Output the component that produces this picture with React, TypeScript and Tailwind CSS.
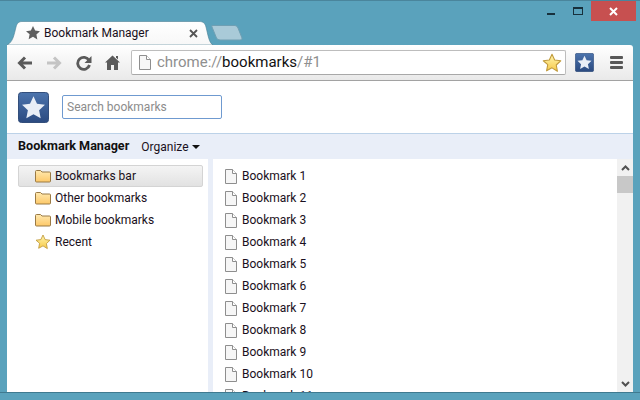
const STAR = "M12 1.5l3.2 6.9 7.3.9-5.4 5.1 1.4 7.5L12 17.8l-6.5 3.6 1.4-7.5L1.5 9.3l7.3-.9z";
const bookmarks = ["Bookmark 1", "Bookmark 2", "Bookmark 3", "Bookmark 4", "Bookmark 5", "Bookmark 6", "Bookmark 7", "Bookmark 8", "Bookmark 9", "Bookmark 10", "Bookmark 11"];

function GoldStar({ size }: { size: number }) {
  return (
    <svg width={size} height={size} viewBox="0 0 24 24" className="shrink-0">
      <defs>
        <linearGradient id="gold" x1="0" y1="0" x2="0" y2="1">
          <stop offset="0" stopColor="#fff6b0" />
          <stop offset="1" stopColor="#f7c948" />
        </linearGradient>
      </defs>
      <path d={STAR} fill="url(#gold)" stroke="#c09a3c" strokeWidth="1.3" strokeLinejoin="round" />
    </svg>
  );
}

function BlueStar({ size, rounded }: { size: number; rounded: number }) {
  return (
    <svg width={size} height={size} viewBox="0 0 32 32" className="shrink-0">
      <defs>
        <linearGradient id="blue" x1="0" y1="0" x2="0" y2="1">
          <stop offset="0" stopColor="#4c74ad" />
          <stop offset="1" stopColor="#2b4a80" />
        </linearGradient>
      </defs>
      <rect x="0.5" y="0.5" width="31" height="31" rx={rounded} fill="url(#blue)" stroke="#2e4a78" />
      <path d="M16 4.500l3.600 7.600 8.200 1-6 5.700 1.600 8.200L16 22.900l-7.400 4.100 1.600-8.200-6-5.700 8.200-1z" fill="#e9eef6" />
    </svg>
  );
}

function Folder() {
  return (
    <svg width="16" height="14" viewBox="0 0 16 14" className="shrink-0">
      <defs>
        <linearGradient id="folder" x1="0" y1="0" x2="0" y2="1">
          <stop offset="0" stopColor="#ffe9b0" />
          <stop offset="1" stopColor="#fdc868" />
        </linearGradient>
      </defs>
      <path d="M.5 12V2.500q0-1 1-1h4L7 3h7.500q1 0 1 1V12q0 1-1 1h-13q-1 0-1-1z" fill="url(#folder)" stroke="#9a7a45" />
    </svg>
  );
}

function PageIcon({ className }: { className: string }) {
  return (
    <svg width="12" height="15" viewBox="0 0 12 15" className={className}>
      <path d="M.5.5h7l4 4v10H.5z" fill="#f6f6f6" stroke="#8e8e8e" />
      <path d="M7.500.5v4h4" fill="#fff" stroke="#8e8e8e" />
    </svg>
  );
}

function TreeRow({ label, selected, star }: { label: string; selected?: boolean; star?: boolean }) {
  return (
    <div className={`h-[22px] flex items-center gap-[4px] rounded-[2px] ${selected ? "bg-gradient-to-b from-[#f4f4f4] to-[#e2e2e2] border border-[#d4d4d4] pl-[16px]" : "pl-[17px]"}`}>
      {star ? <GoldStar size={16} /> : <Folder />}
      <span>{label}</span>
    </div>
  );
}

export default function App() {
  return (
    <div className="w-[640px] h-[400px] overflow-hidden bg-[#5aa2bc] border-t border-[#4a859c] flex flex-col text-[12px] text-[#1a1020] [font-family:Roboto,sans-serif]">
      {/* window buttons */}
      <div className="h-[20px] shrink-0 flex justify-end items-start pr-[4px]">
        <div className="w-[8px] h-[2px] bg-[#17303c] mt-[12px] mr-[18px]" />
        <div className="w-[8px] h-[5px] border border-t-2 border-[#17303c] mt-[6px] mr-[8px] box-content" />
        <div className="w-[45px] h-[20px] bg-[#c75050] flex items-center justify-center text-white">
          <svg width="9" height="9" viewBox="0 0 9 9">
            <path d="M1 1l7 7M8 1L1 8" stroke="#fff" strokeWidth="2" />
          </svg>
        </div>
      </div>

      <div className="mx-[7px] flex-1 min-h-0 flex flex-col">
        {/* tab strip */}
        <div className="h-[24px] shrink-0 flex">
          <div className="relative w-[206px] h-[24px]">
            <svg width="206" height="24" viewBox="0 0 206 24" className="absolute inset-0">
              <defs>
                <linearGradient id="tab" x1="0" y1="0" x2="0" y2="1">
                  <stop offset="0" stopColor="#ffffff" />
                  <stop offset="1" stopColor="#f7f7f7" />
                </linearGradient>
              </defs>
              <path d="M0 24C6 21 7 14 9 6 10 2 12 .5 15 .5H192C196 .5 198 2 199 6 201 14 202 22 206 24Z" fill="url(#tab)" stroke="#4a7f94" strokeWidth=".6" />
            </svg>
            <div className="relative h-full flex items-center pl-[18px] pr-[15px]">
              <svg width="16" height="16" viewBox="0 0 24 24" className="mr-[3px]">
                <path d={STAR} fill="#5f5f5f" />
              </svg>
              <span className="flex-1 text-[#1a1020]">Bookmark Manager</span>
              <svg width="9" height="9" viewBox="0 0 9 9">
                <path d="M1 1l7 7M8 1L1 8" stroke="#555" strokeWidth="1.800" />
              </svg>
            </div>
          </div>
          <svg width="32" height="16" viewBox="0 0 32 16" className="mt-[4px] -ml-[2px]">
            <path d="M1 .5H24Q26 .5 27 3L31 13Q31.500 15 29 15H9Q6.500 15 5.500 13L1 2Q.5 .5 1 .5Z" fill="#a9cad8" stroke="#6f9fb3" />
          </svg>
        </div>

        {/* toolbar */}
        <div className="h-[36px] shrink-0 bg-gradient-to-b from-[#ffffff] to-[#e9e9e9] border-b border-[#a2a2a2] rounded-tr-[3px] flex items-center pl-[10px] pr-[10px]">
          <svg width="16" height="14" viewBox="0 0 16 14" className="mr-[13px]">
            <path d="M15 7H3M8 1.500L2.500 7 8 12.500" fill="none" stroke="#5a5a5a" strokeWidth="3" />
          </svg>
          <svg width="16" height="14" viewBox="0 0 16 14" className="mr-[14px]">
            <path d="M1 7H13M8 1.500L13.500 7 8 12.500" fill="none" stroke="#c4c4c4" strokeWidth="3" />
          </svg>
          <svg width="16" height="16" viewBox="0 0 16 16" className="mr-[13px]">
            <path d="M13 5.500A6 6 0 1 0 13.500 10" fill="none" stroke="#5a5a5a" strokeWidth="2.800" />
            <path d="M15.500 1v7h-7z" fill="#5a5a5a" />
          </svg>
          <svg width="15" height="15" viewBox="0 0 15 15" className="mr-[11px]">
            <path d="M7.500.5L15 7.500h-2V15H9V10H6v5H2V7.500H0z" fill="#5a5a5a" />
            <path d="M11 1h2v3.500l-2-2z" fill="#5a5a5a" />
          </svg>
          <div className="flex-1 h-[25px] bg-white border border-[#bdbdbd] border-b-[#a8a8a8] rounded-[2px] flex items-center pl-[7px] pr-[3px] text-[15px] leading-none">
            <PageIcon className="mr-[6px] shrink-0" />
            <span className="text-[#8f8f8f]">chrome://</span>
            <span className="text-[#111]">bookmarks</span>
            <span className="text-[#8f8f8f]">/#1</span>
            <div className="flex-1" />
            <GoldStar size={20} />
          </div>
          <div className="ml-[9px] mr-[16px]">
            <BlueStar size={19} rounded={3} />
          </div>
          <div className="w-[13px] flex flex-col gap-[2px]">
            <div className="h-[3px] bg-[#585858] rounded-[1px]" />
            <div className="h-[3px] bg-[#585858] rounded-[1px]" />
            <div className="h-[3px] bg-[#585858] rounded-[1px]" />
          </div>
        </div>

        {/* page */}
        <div className="flex-1 min-h-0 bg-white flex flex-col">
          <div className="h-[53px] shrink-0 flex items-center pl-[11px] border-b border-[#bcd2e8]">
            <BlueStar size={31} rounded={3} />
            <div className="ml-[13px] w-[160px] h-[24px] border border-[#6f9ad0] rounded-[2px] flex items-center pl-[4px] text-[#8c8c8c]">
              Search bookmarks
            </div>
          </div>
          <div className="h-[25px] shrink-0 bg-[#e9eef8] flex items-center pl-[11px]">
            <span className="font-bold text-[12.6px] text-[#111]">Bookmark Manager</span>
            <span className="ml-[12px] text-[#1a1020]">Organize</span>
            <div className="ml-[3px] w-0 h-0 border-x-[4px] border-x-transparent border-t-[4px] border-t-[#111]" />
          </div>
          <div className="flex-1 min-h-0 flex overflow-hidden">
            <div className="w-[201px] shrink-0 pt-[6px] pl-[11px] pr-[5px]">
              <TreeRow label="Bookmarks bar" selected />
              <TreeRow label="Other bookmarks" />
              <TreeRow label="Mobile bookmarks" />
              <TreeRow label="Recent" star />
            </div>
            <div className="w-[5px] shrink-0 bg-[#e9eef8]" />
            <div className="flex-1 min-w-0 pt-[6px] pl-[12px] overflow-hidden">
              {bookmarks.map((b) => (
                <div key={b} className="h-[22px] flex items-center gap-[5px]">
                  <PageIcon className="shrink-0" />
                  <span>{b}</span>
                </div>
              ))}
            </div>
            <div className="w-[16px] shrink-0 bg-[#f1f1f1] flex flex-col items-center">
              <div className="h-[17px] flex items-center justify-center">
                <svg width="9" height="6" viewBox="0 0 9 6">
                  <path d="M1 5l3.500-3.500L8 5" fill="none" stroke="#505050" strokeWidth="2" />
                </svg>
              </div>
              <div className="w-full h-[17px] bg-[#c8c8c8]" />
              <div className="flex-1" />
              <div className="h-[17px] flex items-center justify-center">
                <svg width="9" height="6" viewBox="0 0 9 6">
                  <path d="M1 1l3.500 3.500L8 1" fill="none" stroke="#505050" strokeWidth="2" />
                </svg>
              </div>
            </div>
          </div>
        </div>
      </div>
      <div className="h-[8px] shrink-0 border-t border-[#3f7a90]" />
    </div>
  );
}
